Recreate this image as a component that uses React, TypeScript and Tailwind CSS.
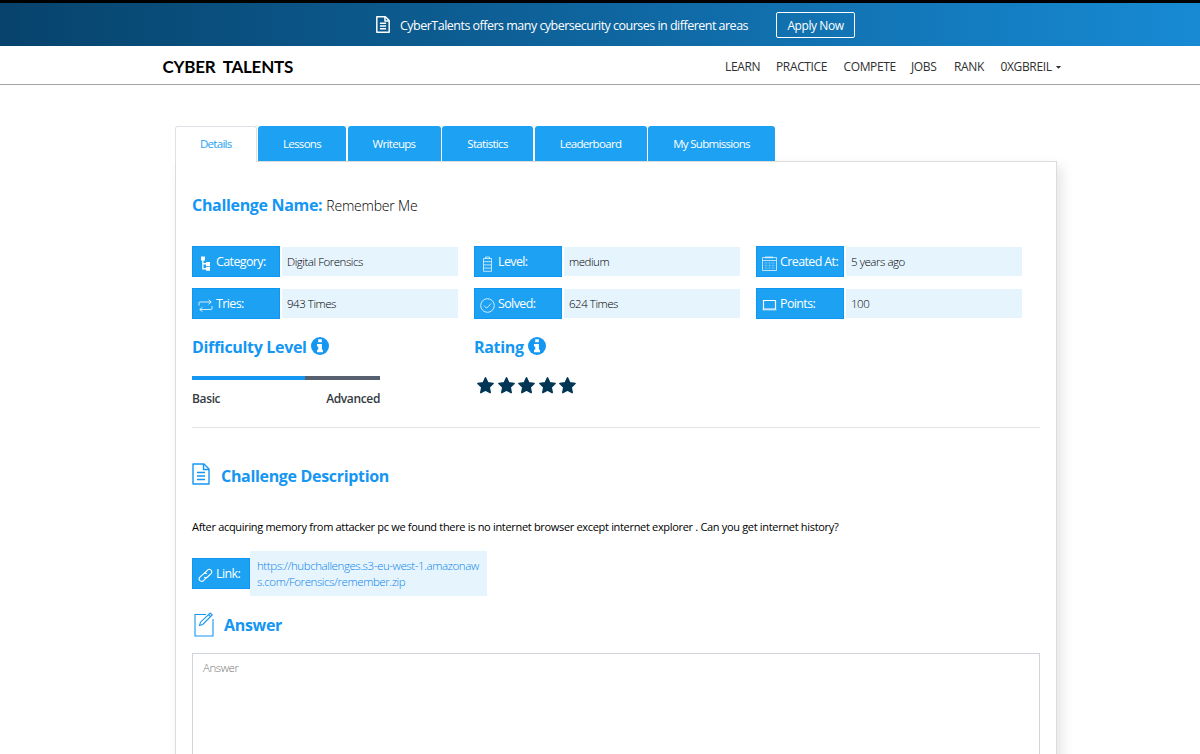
import { ReactNode } from "react";
import { FaCaretDown } from "react-icons/fa";

const FileIcon = ({ className, weight }: { className: string; weight: number }) => (
  <svg
    className={className}
    viewBox="0 0 18 22"
    fill="none"
    stroke="currentColor"
    strokeWidth={weight}
    strokeLinejoin="round"
  >
    <path d="M1 1h11l5 5v15H1z" />
    <path d="M11.500 1v5.500H17M5 9.500h8M5 13h8M5 16.500h8" />
  </svg>
);

const InfoIcon = () => (
  <svg className="-mt-0.5 h-[18px] w-[18px]" viewBox="0 0 18 18">
    <circle cx="9" cy="9" r="9" fill="currentColor" />
    <path fill="#fff" d="M7.200 2.300h3.600v3H7.200zM6 7.100h4.900v5.700H12v2.400H6v-2.400h1.200V9.500H6z" />
  </svg>
);

const TreeIcon = () => (
  <svg className="w-[15px] h-[15px]" viewBox="0 0 15 15" fill="currentColor">
    <path d="M3 .5h4v4H5.500v2.500H8v-1h4v4H8V8.400H5.500v3.600H8V10.800h4v4H8v-1.400H4.200V4.500H3z" />
  </svg>
);

const RepeatIcon = () => (
  <svg className="w-[15px] h-[15px]" viewBox="0 0 15 15" fill="none" stroke="currentColor" strokeWidth={0.8}>
    <path d="M1 7.500V5q0-1 1-1h11M10.500 1.800 13.300 4l-2.800 2.200M14 8v2.500q0 1-1 1H2M4.500 9.300 1.700 11.500l2.800 2.200" />
  </svg>
);

const BatteryIcon = () => (
  <svg className="w-[15px] h-[16px]" viewBox="0 0 15 16" fill="none" stroke="currentColor" strokeWidth={0.7}>
    <path d="M5.500 2.500V1h4v1.500M3.500 2.500h8v12.800h-8zM3.500 5.700h8M3.500 8.900h8M3.500 12.100h8" />
  </svg>
);

const CheckIcon = () => (
  <svg className="w-[15px] h-[15px]" viewBox="0 0 15 15" fill="none" stroke="currentColor" strokeWidth={0.8}>
    <circle cx="7.500" cy="7.500" r="6.800" />
    <path d="m4 7.700 2.500 2.500 4.700-4.700" />
  </svg>
);

const CalendarIcon = () => (
  <svg className="w-[15px] h-[15px]" viewBox="0 0 15 15" fill="none" stroke="currentColor" strokeWidth={0.7}>
    <path d="M.5 1.500h14v13H.5zM.5 4.500h14" />
    <path d="M4 0v2.500M6 0v2.500M8 0v2.500M10 0v2.500" />
    <path d="M2 7h11M2 9.500h11M2 12h11M4 5.500v8M7.500 5.500v8M11 5.500v8" opacity="0.3" />
  </svg>
);

const PointsIcon = () => (
  <svg className="w-[15px] h-[15px]" viewBox="0 0 15 15" fill="none" stroke="currentColor">
    <path d="M1.500 2.500h12v8.500h-12z" strokeWidth={1.200} />
    <path d="M.5 11.800h14" strokeWidth={0.8} />
  </svg>
);

const LinkIcon = () => (
  <svg className="w-[15px] h-[15px]" viewBox="0 0 15 15" fill="none" stroke="currentColor" strokeWidth={1.100}>
    <path d="M6.200 5.500 9.500 2.200a2.400 2.400 0 0 1 3.600 3.400L9.500 9a2.400 2.400 0 0 1-3.400.1" />
    <path d="M8.800 9.200 5.500 12.600a2.400 2.400 0 0 1-3.600-3.400L5.500 5.800a2.400 2.400 0 0 1 3.400 0" />
  </svg>
);

const EditIcon = () => (
  <svg className="w-[20px] h-[25px]" viewBox="0 0 20 25" fill="none" stroke="currentColor" strokeWidth={1.100}>
    <path d="M12 2.500H1v21.500h18V7" />
    <path d="m5.500 13.500 1-3.300L16.200 1l2 2L8.700 12.500zM14.500 2.700l2 2" />
  </svg>
);

const Star = () => (
  <svg className="w-[17px] h-[17px]" viewBox="0 0 17 17" fill="#033554" stroke="#033554" strokeWidth={1.500} strokeLinejoin="round">
    <path d="m8.500 .9 2.300 4.800 5.300.7-3.900 3.700 1 5.500-4.700-2.600-4.700 2.600 1-5.500L.9 6.400l5.300-.7z" />
  </svg>
);

const navLinks = [
  { label: "LEARN", width: "w-[51px]" },
  { label: "PRACTICE", width: "w-[67.500px]" },
  { label: "COMPETE", width: "w-[67.500px]" },
  { label: "JOBS", width: "w-[43px]" },
  { label: "RANK", width: "w-[46.500px]" },
];

const tabs = [
  { label: "Lessons", width: "w-[88px]" },
  { label: "Writeups", width: "w-[93px]" },
  { label: "Statistics", width: "w-[91px]" },
  { label: "Leaderboard", width: "w-[112px]" },
  { label: "My Submissions", width: "w-[127px]" },
];

const facts = [
  { label: "Category:", value: "Digital Forensics", icon: <TreeIcon /> },
  { label: "Level:", value: "medium", icon: <BatteryIcon /> },
  { label: "Created At:", value: "5 years ago", icon: <CalendarIcon /> },
  { label: "Tries:", value: "943 Times", icon: <RepeatIcon /> },
  { label: "Solved:", value: "624 Times", icon: <CheckIcon /> },
  { label: "Points:", value: "100", icon: <PointsIcon /> },
];

const Label = ({ icon, children, className }: { icon: ReactNode; children: ReactNode; className: string }) => (
  <div
    className={`flex h-[31px] shrink-0 items-center gap-[3px] border border-[#0d96f2] bg-[#1da1f2] pl-[5px] text-[12.500px] tracking-[-0.05em] text-white ${className}`}
  >
    <span className="mt-1 shrink-0">{icon}</span>
    <span className="mt-0.5 whitespace-nowrap">{children}</span>
  </div>
);

const Heading = ({ children }: { children: ReactNode }) => (
  <h2 className="text-[16px] leading-6 font-bold tracking-[-0.02em] text-[#1496f3] whitespace-nowrap">{children}</h2>
);

const App = () => {
  return (
    <div className="h-[754px] overflow-hidden bg-white font-['Open_Sans','Noto_Sans',sans-serif] text-[#212529]">
      <div className="flex h-[46px] items-center border-t-[3px] border-black bg-linear-to-r from-[#07436c] to-[#178ad4] pl-[376px] text-white">
        <FileIcon className="h-[17px] w-[14px] -mt-px" weight={1.900} />
        <span className="mt-[3px] ml-[10px] w-[376px] whitespace-nowrap text-[12.500px] font-medium tracking-[-0.041em]">
          CyberTalents offers many cybersecurity courses in different areas
        </span>
        <button className="mt-px h-[26px] w-[79px] rounded-[2px] border border-white pt-px text-[12px] font-medium tracking-[-0.035em] whitespace-nowrap">
          Apply Now
        </button>
      </div>

      <header className="flex h-[39px] items-center border-b border-[#a5a5a5] pt-[3px] pl-[162.500px]">
        <div className="w-[562.500px] font-['Lato',sans-serif] text-[17px] font-bold tracking-[-0.015em] [word-spacing:4px] text-black whitespace-nowrap">
          CYBER TALENTS
        </div>
        <nav className="flex text-[12px] font-medium tracking-[-0.03em] text-[#303030]">
          {navLinks.map((link) => (
            <a key={link.label} className={link.width}>
              {link.label}
            </a>
          ))}
          <a className="flex items-center gap-[3px]">
            0XGBREIL <FaCaretDown className="h-2 w-[7px]" />
          </a>
        </nav>
      </header>

      <main className="ml-[175px] mt-[41px] w-[882px]">
        <div className="flex h-[35px] gap-[1.500px] text-[11.500px] leading-[35px] tracking-[-0.06em]">
          <div className="relative z-10 h-9 w-[81.500px] rounded-t-[3px] border border-b-0 border-[#dee2e6] bg-white text-center leading-[34px] text-[#1da1f2]">
            Details
          </div>
          {tabs.map((tab) => (
            <div key={tab.label} className={`rounded-t-[3px] bg-[#1da1f2] text-center text-white whitespace-nowrap ${tab.width}`}>
              {tab.label}
            </div>
          ))}
        </div>

        <section className="h-[640px] border border-[#dcdcdc] px-4 pt-[31px] shadow-[5px_5px_12px_rgba(0,0,0,0.1)]">
          <div className="flex items-baseline gap-1">
            <Heading>Challenge Name:</Heading>
            <span className="text-[14px] font-light tracking-[-0.015em] text-black">Remember Me</span>
          </div>

          <div className="mt-[29px] grid grid-cols-[266px_266px_266px] gap-x-4 gap-y-[11px]">
            {facts.map((fact) => (
              <div key={fact.label} className="flex items-center gap-[2px]">
                <Label icon={fact.icon} className="w-[88px]">
                  {fact.label}
                </Label>
                <div className="h-[29px] flex-1 bg-[#e6f4fe] pl-[5px] text-[11.500px] leading-[29px] font-light tracking-[-0.04em] text-black">
                  {fact.value}
                </div>
              </div>
            ))}
          </div>

          <div className="mt-4 flex">
            <div className="w-[188px]">
              <div className="flex items-center gap-1 text-[#1496f3]">
                <Heading>Difficulty Level</Heading>
                <InfoIcon />
              </div>
              <div className="mt-[17px] flex h-1">
                <div className="w-[113px] bg-[#1496f3]" />
                <div className="flex-1 bg-[#57606f]" />
              </div>
              <div className="mt-[10px] flex justify-between text-[12px] leading-[18px] font-semibold tracking-[-0.03em] text-[#343a40]">
                <span>Basic</span>
                <span>Advanced</span>
              </div>
            </div>
            <div className="ml-[94px]">
              <div className="flex items-center gap-1 text-[#1496f3]">
                <Heading>Rating</Heading>
                <InfoIcon />
              </div>
              <div className="mt-[18px] ml-[3px] flex gap-[3.500px]">
                {[1, 2, 3, 4, 5].map((n) => (
                  <Star key={n} />
                ))}
              </div>
            </div>
          </div>

          <hr className="mt-[19px] border-[#e2e2e2]" />

          <div className="mt-9 flex items-center gap-[11px] text-[#1496f3]">
            <FileIcon className="h-[22px] w-[18px] -mt-1" weight={1.400} />
            <Heading>Challenge Description</Heading>
          </div>

          <p className="mt-[30px] text-[11px] leading-[18px] font-normal tracking-[-0.029em] text-black whitespace-nowrap">
            After acquiring memory from attacker pc we found there is no internet browser except internet explorer . Can you get internet history?
          </p>

          <div className="mt-[15px] flex items-center">
            <Label icon={<LinkIcon />} className="w-[58px]">
              Link:
            </Label>
            <a className="h-[45px] w-[237px] bg-[#e6f4fe] pt-[7px] pl-[7px] text-[11.500px] leading-4 font-light text-[#0a84e8]">
              <span className="block whitespace-nowrap tracking-[-0.036em]">https://hubchallenges.s3-eu-west-1.amazonaw</span>
              <span className="block whitespace-nowrap tracking-[-0.036em]">s.com/Forensics/remember.zip</span>
            </a>
          </div>

          <div className="mt-4 ml-[2px] flex items-center gap-[10px] text-[#1496f3]">
            <EditIcon />
            <Heading>Answer</Heading>
          </div>

          <textarea
            placeholder="Answer"
            className="mt-4 block h-[150px] w-full resize-none border border-[#ced4da] px-[10px] py-[6px] text-[11.500px] leading-4 font-light tracking-[-0.04em] placeholder:text-[#757575]"
          />
        </section>
      </main>
    </div>
  );
};

export default App;
